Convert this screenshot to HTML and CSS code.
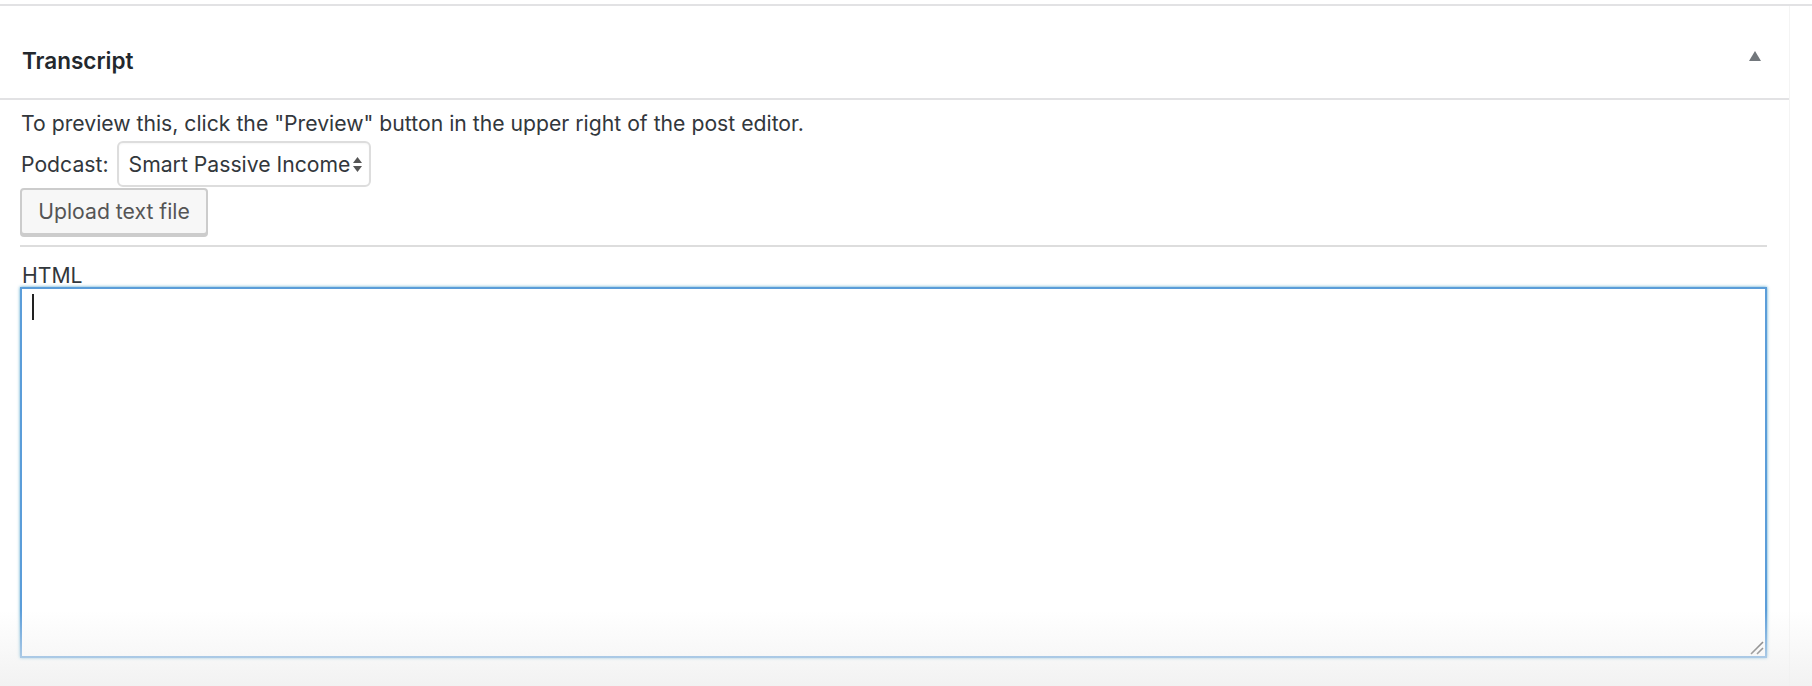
FILE: index.html
```html
<!DOCTYPE html>
<html>
<head>
<meta charset="utf-8">
<link rel="stylesheet" href="styles.css">
</head>
<body>
<div class="page">
  <div class="topline"></div>
  <div class="panel">
    <div class="panel-head">
      <h2 class="title">Transcript</h2>
      <span class="toggle"></span>
    </div>
    <div class="panel-body">
      <p class="note">To preview this, click the "Preview" button in the upper right of the post editor.</p>
      <div class="podcast-row">
        <span class="label">Podcast:</span>
        <div class="select">
          <span>Smart Passive Income</span>
          <svg class="arrows" width="9" height="15" viewBox="0 0 9 15"><path d="M4.5 0 L9 6 H0 Z" fill="#555"/><path d="M0 9 H9 L4.5 15 Z" fill="#555"/></svg>
        </div>
      </div>
      <button class="upload">Upload text file</button>
      <div class="rule"></div>
      <div class="html-label">HTML</div>
      <div class="textarea">
        <span class="caret"></span>
        <svg class="grip" width="14" height="14" viewBox="0 0 14 14"><path d="M1 13 L13 1 M7 13 L13 7" stroke="#555" stroke-width="1.6" fill="none"/></svg>
      </div>
    </div>
  </div>
  <div class="fade"></div>
</div>
</body>
</html>
```
FILE: styles.css
```css
html, body {
  margin: 0;
  padding: 0;
  background: #fff;
}
body {
  font-family: Inter, "Liberation Sans", Arial, sans-serif;
  color: #32373c;
  width: 1812px;
  height: 686px;
  overflow: hidden;
}
.page {
  position: relative;
  height: 686px;
}
.topline {
  height: 2px;
  margin-top: 4px;
  background: #e2e2e4;
}
.panel {
  width: 1789px;
  border-right: 1px solid #f4f4f4;
  height: 680px;
}
.panel-head {
  height: 92px;
  border-bottom: 2px solid #e2e2e4;
  display: flex;
  align-items: center;
  justify-content: space-between;
  padding: 0 28px 0 22px;
}
.title {
  margin: 0;
  font-size: 22.5px;
  font-weight: 600;
  color: #23282d;
  position: relative;
  top: 8px;
}
.toggle {
  width: 0;
  height: 0;
  border-left: 6.5px solid transparent;
  border-right: 6.5px solid transparent;
  border-bottom: 10px solid #72777c;
  position: relative;
  top: 4px;
}
.panel-body {
  padding: 0 22px 0 20px;
}
.note {
  margin: 0;
  padding: 11px 0 0 1px;
  font-size: 21.2px;
  line-height: 25px;
  color: #32373c;
}
.podcast-row {
  display: flex;
  align-items: center;
  gap: 8px;
  margin-top: 5px;
  padding-left: 1px;
}
.label {
  font-size: 21.2px;
}
.select {
  height: 46px;
  width: 254px;
  box-sizing: border-box;
  border: 2px solid #ddd;
  border-radius: 6px;
  display: flex;
  align-items: center;
  justify-content: space-between;
  padding: 0 7px 0 10px;
  font-size: 21.2px;
  color: #32373c;
  white-space: nowrap;
  box-shadow: inset 0 1px 2px rgba(0,0,0,0.04);
}
.arrows {
  margin-top: 1px;
  flex: none;
}
.upload {
  display: block;
  margin-top: 1px;
  height: 47px;
  width: 188px;
  box-sizing: border-box;
  border: 2px solid #ccc;
  border-radius: 4px;
  background: #f7f7f7;
  box-shadow: 0 2px 0 #ccc;
  font-family: Inter, "Liberation Sans", Arial, sans-serif;
  font-size: 21.2px;
  color: #555;
  padding: 0 0 2px;
}
.rule {
  height: 2px;
  background: #ddd;
  margin-top: 10px;
}
.html-label {
  margin-top: 18px;
  padding-left: 2px;
  font-size: 21.2px;
  line-height: 20px;
  color: #32373c;
}
.textarea {
  position: relative;
  margin-top: 2px;
  height: 371px;
  box-sizing: border-box;
  border: 2px solid #5b9dd9;
  box-shadow: 0 0 3px rgba(30,140,190,0.8);
  background: #fff;
}
.caret {
  position: absolute;
  left: 10px;
  top: 5px;
  width: 2px;
  height: 26px;
  background: #222;
}
.grip {
  position: absolute;
  right: 1px;
  bottom: 1px;
}
.fade {
  position: absolute;
  left: 0;
  right: 0;
  bottom: 0;
  height: 80px;
  background: linear-gradient(to bottom, rgba(240,240,240,0), rgba(240,240,240,0.9));
  pointer-events: none;
}
```
